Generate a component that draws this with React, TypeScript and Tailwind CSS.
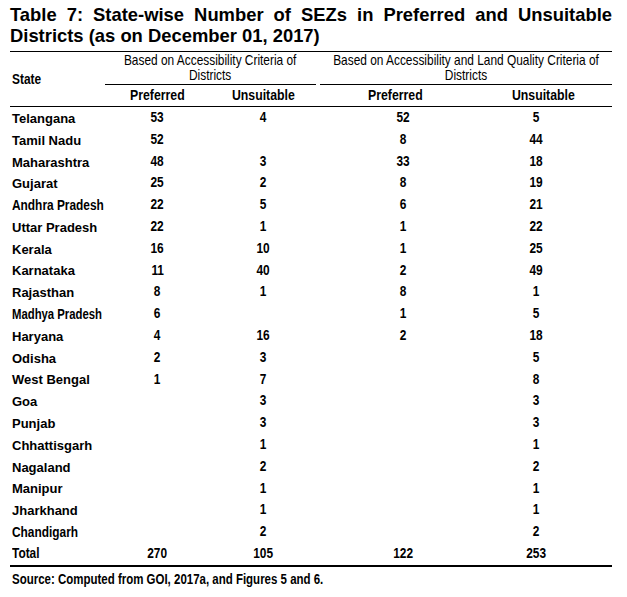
import React from 'react';

type Row = { state: string; a?: string; b?: string; c?: string; d?: string; size?: string };

const rows: Row[] = [
  { state: 'Telangana', a: '53', b: '4', c: '52', d: '5' },
  { state: 'Tamil Nadu', a: '52', c: '8', d: '44' },
  { state: 'Maharashtra', a: '48', b: '3', c: '33', d: '18' },
  { state: 'Gujarat', a: '25', b: '2', c: '8', d: '19' },
  { state: 'Andhra Pradesh', a: '22', b: '5', c: '6', d: '21', size: 'text-[14.5px]' },
  { state: 'Uttar Pradesh', a: '22', b: '1', c: '1', d: '22' },
  { state: 'Kerala', a: '16', b: '10', c: '1', d: '25' },
  { state: 'Karnataka', a: '11', b: '40', c: '2', d: '49' },
  { state: 'Rajasthan', a: '8', b: '1', c: '8', d: '1' },
  { state: 'Madhya Pradesh', a: '6', c: '1', d: '5', size: 'text-[13.8px]' },
  { state: 'Haryana', a: '4', b: '16', c: '2', d: '18' },
  { state: 'Odisha', a: '2', b: '3', d: '5' },
  { state: 'West Bengal', a: '1', b: '7', d: '8' },
  { state: 'Goa', b: '3', d: '3' },
  { state: 'Punjab', b: '3', d: '3' },
  { state: 'Chhattisgarh', b: '1', d: '1' },
  { state: 'Nagaland', b: '2', d: '2' },
  { state: 'Manipur', b: '1', d: '1' },
  { state: 'Jharkhand', b: '1', d: '1' },
  { state: 'Chandigarh', b: '2', d: '2', size: 'text-[14.5px]' },
];

// no Arial Narrow in the sandbox: squeeze Arial horizontally instead
const Narrow = ({ children, left }: { children?: React.ReactNode; left?: boolean }) => (
  <span className={`inline-block whitespace-nowrap scale-x-[0.82] ${left ? 'origin-left' : 'origin-center'}`}>
    {children}
  </span>
);

const Cells = ({ a, b, c, d }: { a?: string; b?: string; c?: string; d?: string }) => (
  <>
    <div className="w-[105px] shrink-0 text-center">{a && <Narrow>{a}</Narrow>}</div>
    <div className="w-[106px] shrink-0 text-center">{b && <Narrow>{b}</Narrow>}</div>
    <div className="w-[159px] shrink-0 pl-[16px] text-center">{c && <Narrow>{c}</Narrow>}</div>
    <div className="w-[137px] shrink-0 pr-[14px] text-center">{d && <Narrow>{d}</Narrow>}</div>
  </>
);

const DataRow = ({ r }: { r: Row }) => (
  <div className="flex h-[21.8px] items-center font-bold">
    <div className="w-[95px] shrink-0 pl-[2px] whitespace-nowrap">
      {r.size ? (
        <span className={r.size}>
          <Narrow left>{r.state}</Narrow>
        </span>
      ) : (
        <span className="text-[13px]">{r.state}</span>
      )}
    </div>
    <div className="flex text-[14.5px]">
      <Cells a={r.a} b={r.b} c={r.c} d={r.d} />
    </div>
  </div>
);

const GroupHead = ({ title }: { title: string }) => (
  <>
    <div className="flex h-[32px] justify-center pt-[1px] text-[14.5px] leading-[15px]">
      <div className="shrink-0 scale-x-[0.82] whitespace-nowrap text-center">
        {title}
        <br />
        Districts
      </div>
    </div>
    <div className="border-t border-black" />
  </>
);

export default function App() {
  return (
    <div className="w-[627px] h-[597px] bg-white pl-[10px] pr-[15px] pt-[4px] text-black font-['Liberation_Sans',Arial,sans-serif]">
      <div className="text-[18.4px] font-bold leading-[21px]">
        <div className="text-justify [text-align-last:justify]">
          Table 7: State-wise Number of SEZs in Preferred and Unsuitable
        </div>
        <div>Districts (as on December 01, 2017)</div>
      </div>

      <div className="mt-[5px] border-t-[1.5px] border-black">
        <div className="flex">
          <div className="w-[95px] shrink-0 pl-[2px] pt-[17px] text-[14.5px] font-bold">
            <Narrow left>State</Narrow>
          </div>
          <div className="min-w-0 flex-1">
            <div className="flex">
              <div className="w-[211px] shrink-0">
                <GroupHead title="Based on Accessibility Criteria of" />
              </div>
              <div className="ml-[4px] min-w-0 flex-1">
                <GroupHead title="Based on Accessibility and Land Quality Criteria of" />
              </div>
            </div>
            <div className="flex h-[21px] items-center text-[15px] font-bold">
              <div className="w-[105px] shrink-0 text-center"><Narrow>Preferred</Narrow></div>
              <div className="w-[106px] shrink-0 text-center"><Narrow>Unsuitable</Narrow></div>
              <div className="w-[159px] shrink-0 text-center"><Narrow>Preferred</Narrow></div>
              <div className="w-[137px] shrink-0 text-center"><Narrow>Unsuitable</Narrow></div>
            </div>
          </div>
        </div>
      </div>

      <div className="border-t-[1.5px] border-black">
        {rows.map((r) => (
          <DataRow key={r.state} r={r} />
        ))}
        <div className="flex h-[21.8px] items-center text-[14.5px] font-bold">
          <div className="w-[95px] shrink-0 pl-[2px]"><Narrow left>Total</Narrow></div>
          <Cells a="270" b="105" c="122" d="253" />
        </div>
      </div>

      <div className="border-t-2 border-black pt-[2px] pl-[2px] text-[14px] font-bold">
        <Narrow left>Source: Computed from GOI, 2017a, and Figures 5 and 6.</Narrow>
      </div>
    </div>
  );
}
